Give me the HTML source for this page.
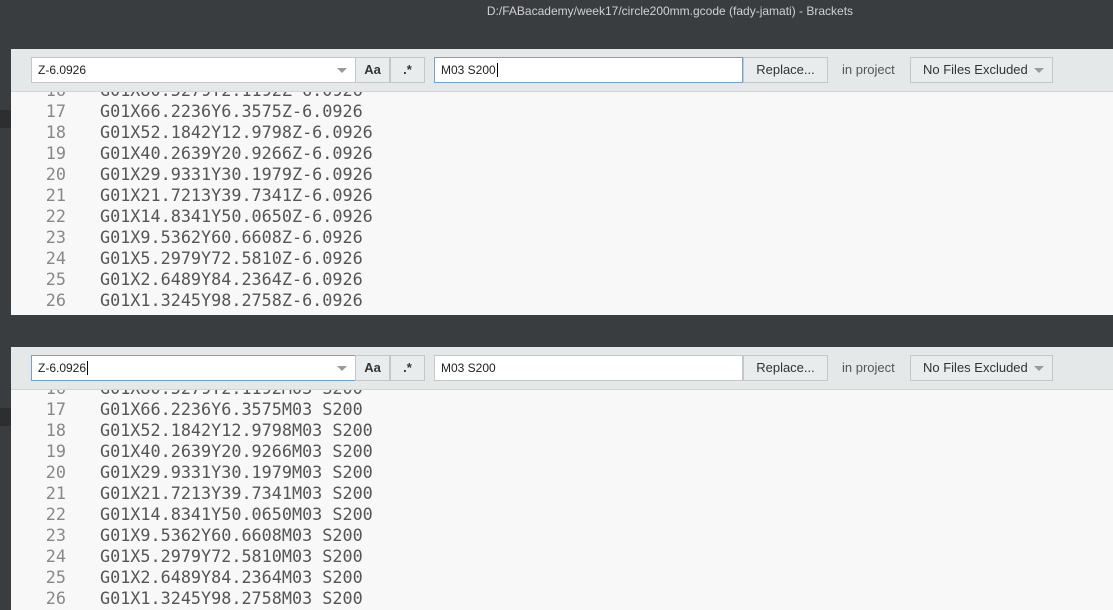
<!DOCTYPE html>
<html><head><style>
body{margin:0;width:1113px;height:610px;background:#3a3d40;position:relative;overflow:hidden;font-family:"Liberation Sans",sans-serif}
.title{position:absolute;top:4px;left:0;width:1340px;text-align:center;color:#d0d0d0;font-size:12px}
.panel{position:absolute;left:11px;right:0;background:#f8f8f8;overflow:hidden}
.bar{position:absolute;left:0;right:0;top:0;height:42px;background:#e5e8e9;border-bottom:1px solid #d2d5d6;z-index:2}
.in{position:absolute;top:8px;height:26px;background:#fff;border:1px solid #c4c7c9;box-sizing:border-box;font-size:12px;line-height:24px;padding-left:6px;color:#222}
.in.f{border-color:#6fa3d6}
.btn{position:absolute;top:8px;height:26px;box-sizing:border-box;background:#e9ecec;border:1px solid #c4c7c9;font-size:13px;line-height:24px;text-align:center;color:#333}
.tri{position:absolute;width:0;height:0;border-left:5px solid transparent;border-right:5px solid transparent;border-top:5px solid #9a9a9a}
.code{position:absolute;left:0;right:0;font-family:"DejaVu Sans Mono",monospace;font-size:16.8px;color:#555}
.l{height:21px;line-height:21px;white-space:pre}
.n{display:inline-block;width:55px;text-align:right;color:#888;margin-right:34px}
</style></head><body>
<div class="title">D:/FABacademy/week17/circle200mm.gcode (fady-jamati) - Brackets</div>
<div style="position:absolute;left:0;top:110px;width:11px;height:18px;background:#2c2e30"></div>
<div style="position:absolute;left:0;top:408px;width:11px;height:18px;background:#2c2e30"></div>

<div class="panel" style="top:49px;height:266px">
 <div class="bar">
  <div class="in" style="left:20px;width:325px">Z-6.0926</div><div class="tri" style="left:326px;top:19px"></div>
  <div class="btn" style="left:344px;width:35px;font-weight:bold">Aa</div>
  <div class="btn" style="left:379px;width:35px;font-weight:bold">.*</div>
  <div class="in f" style="left:423px;width:309px">M03 S200<span style="border-left:1px solid #000;margin-left:1px"></span></div>
  <div class="btn" style="left:732px;width:85px">Replace...</div>
  <div style="position:absolute;left:831px;top:13px;font-size:13px;color:#555">in project</div>
  <div class="btn" style="left:899px;width:143px;text-align:left;padding-left:12px">No Files Excluded</div><div class="tri" style="left:1023px;top:19px"></div>
 </div>
 <div class="code" style="top:31px">
<div class="l"><span class="n">16</span>G01X80.5279Y2.1192Z-6.0926</div>
<div class="l"><span class="n">17</span>G01X66.2236Y6.3575Z-6.0926</div>
<div class="l"><span class="n">18</span>G01X52.1842Y12.9798Z-6.0926</div>
<div class="l"><span class="n">19</span>G01X40.2639Y20.9266Z-6.0926</div>
<div class="l"><span class="n">20</span>G01X29.9331Y30.1979Z-6.0926</div>
<div class="l"><span class="n">21</span>G01X21.7213Y39.7341Z-6.0926</div>
<div class="l"><span class="n">22</span>G01X14.8341Y50.0650Z-6.0926</div>
<div class="l"><span class="n">23</span>G01X9.5362Y60.6608Z-6.0926</div>
<div class="l"><span class="n">24</span>G01X5.2979Y72.5810Z-6.0926</div>
<div class="l"><span class="n">25</span>G01X2.6489Y84.2364Z-6.0926</div>
<div class="l"><span class="n">26</span>G01X1.3245Y98.2758Z-6.0926</div>
 </div>
</div>

<div class="panel" style="top:347px;height:263px">
 <div class="bar">
  <div class="in f" style="left:20px;width:325px">Z-6.0926<span style="border-left:1px solid #000;margin-left:1px"></span></div><div class="tri" style="left:326px;top:19px"></div>
  <div class="btn" style="left:344px;width:35px;font-weight:bold">Aa</div>
  <div class="btn" style="left:379px;width:35px;font-weight:bold">.*</div>
  <div class="in" style="left:423px;width:309px">M03 S200</div>
  <div class="btn" style="left:732px;width:85px">Replace...</div>
  <div style="position:absolute;left:831px;top:13px;font-size:13px;color:#555">in project</div>
  <div class="btn" style="left:899px;width:143px;text-align:left;padding-left:12px">No Files Excluded</div><div class="tri" style="left:1023px;top:19px"></div>
 </div>
 <div class="code" style="top:31px">
<div class="l"><span class="n">16</span>G01X80.5279Y2.1192M03 S200</div>
<div class="l"><span class="n">17</span>G01X66.2236Y6.3575M03 S200</div>
<div class="l"><span class="n">18</span>G01X52.1842Y12.9798M03 S200</div>
<div class="l"><span class="n">19</span>G01X40.2639Y20.9266M03 S200</div>
<div class="l"><span class="n">20</span>G01X29.9331Y30.1979M03 S200</div>
<div class="l"><span class="n">21</span>G01X21.7213Y39.7341M03 S200</div>
<div class="l"><span class="n">22</span>G01X14.8341Y50.0650M03 S200</div>
<div class="l"><span class="n">23</span>G01X9.5362Y60.6608M03 S200</div>
<div class="l"><span class="n">24</span>G01X5.2979Y72.5810M03 S200</div>
<div class="l"><span class="n">25</span>G01X2.6489Y84.2364M03 S200</div>
<div class="l"><span class="n">26</span>G01X1.3245Y98.2758M03 S200</div>
 </div>
</div>
</body></html>
